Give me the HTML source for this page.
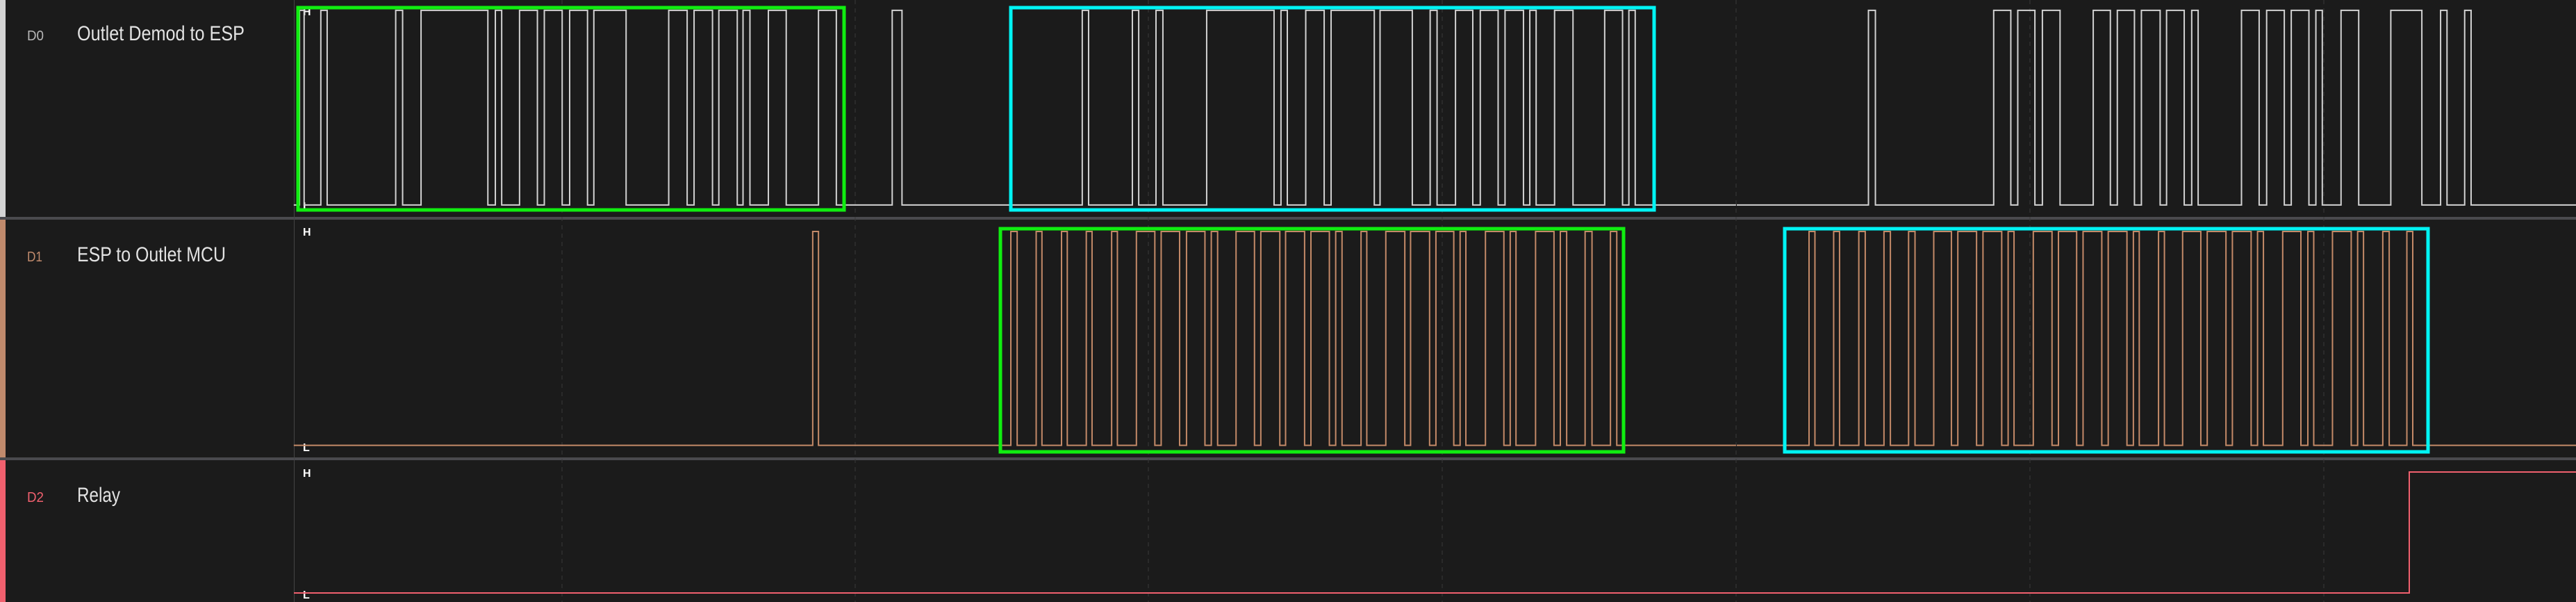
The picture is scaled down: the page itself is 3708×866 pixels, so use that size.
<!DOCTYPE html>
<html><head><meta charset="utf-8"><style>
html,body{margin:0;padding:0;background:#1b1b1b;width:3708px;height:866px;overflow:hidden}
svg{display:block}
text{font-family:"Liberation Sans",sans-serif}
</style></head><body>
<svg width="3708" height="866" viewBox="0 0 3708 866" xmlns="http://www.w3.org/2000/svg">
<rect width="3708" height="866" fill="#1b1b1b"/>
<rect x="0" y="0" width="8" height="312" fill="#d4d4d4"/>
<rect x="0" y="316" width="8" height="343" fill="#c08a6c"/>
<rect x="0" y="662" width="8" height="204" fill="#f0606e"/>
<rect x="0" y="312" width="3708" height="4" fill="#4a4a4e"/>
<rect x="0" y="658" width="3708" height="4" fill="#4a4a4e"/>
<rect x="423" y="0" width="1" height="866" fill="#444"/>
<g stroke="#3a3a3a" stroke-width="1" stroke-dasharray="6,6">
<line x1="809" y1="0" x2="809" y2="866"/><line x1="1231" y1="0" x2="1231" y2="866"/>
<line x1="1653" y1="0" x2="1653" y2="866"/><line x1="2076" y1="0" x2="2076" y2="866"/>
<line x1="2499" y1="0" x2="2499" y2="866"/><line x1="2922" y1="0" x2="2922" y2="866"/>
<line x1="3345" y1="0" x2="3345" y2="866"/>
</g>
<text x="39" y="58" font-size="20" fill="#b8b8b8" textLength="24" lengthAdjust="spacingAndGlyphs">D0</text>
<text x="111" y="58" font-size="30" fill="#e2e2e2" textLength="241" lengthAdjust="spacingAndGlyphs">Outlet Demod to ESP</text>
<text x="39" y="376" font-size="20" fill="#c08a6c" textLength="22" lengthAdjust="spacingAndGlyphs">D1</text>
<text x="111" y="376" font-size="30" fill="#e2e2e2" textLength="214" lengthAdjust="spacingAndGlyphs">ESP to Outlet MCU</text>
<text x="39" y="722" font-size="20" fill="#f0606e" textLength="24" lengthAdjust="spacingAndGlyphs">D2</text>
<text x="111" y="722" font-size="30" fill="#e2e2e2" textLength="62" lengthAdjust="spacingAndGlyphs">Relay</text>
<g font-size="16" font-weight="bold" fill="#ffffff">
<text x="436" y="22">H</text><text x="436" y="302">L</text>
<text x="436" y="339">H</text><text x="436" y="649">L</text>
<text x="436" y="686">H</text><text x="436" y="861">L</text>
</g>
<g fill="none" stroke="#d2d2d2" stroke-width="2">
<path vector-effect="non-scaling-stroke" transform="scale(0.8291,0.5523)" d="M510,534 H520 V27 H528 V534 H557 V27 H568 V534 H687 V27 H699 V534 H731 V27 H847 V534 H860 V27 H871 V534 H902 V27 H933 V534 H945 V27 H976 V534 H989 V27 H1020 V534 H1031 V27 H1087 V534 H1161 V27 H1193 V534 H1205 V27 H1237 V534 H1248 V27 H1280 V534 H1290 V27 H1302 V534 H1334 V27 H1365 V534 H1421 V27 H1452 V534 H1549 V27 H1566 V534 H1568"/>
<path vector-effect="non-scaling-stroke" transform="translate(1300,0) scale(0.8291,0.5523)" d="M0,534 H311 V27 H322 V534 H398 V27 H409 V534 H439 V27 H451 V534 H527 V27 H644 V534 H656 V27 H667 V534 H699 V27 H731 V534 H743 V27 H818 V534 H828 V27 H884 V534 H915 V27 H927 V534 H959 V27 H989 V534 H1002 V27 H1033 V534 H1045 V27 H1077 V534 H1088 V27 H1099 V534 H1131 V27 H1163 V534 H1218 V27 H1249 V534 H1260 V27 H1271 V534 H1446"/>
<path vector-effect="non-scaling-stroke" transform="translate(2500,0) scale(0.7704,0.5523)" d="M0,534 H246 V27 H259 V534 H480 V27 H512 V534 H525 V27 H557 V534 H571 V27 H604 V534 H666 V27 H698 V534 H711 V27 H743 V534 H756 V27 H791 V534 H803 V27 H836 V534 H850 V27 H862 V534 H943 V27 H976 V534 H990 V27 H1023 V534 H1036 V27 H1069 V534 H1082 V27 H1094 V534 H1129 V27 H1162 V534 H1222 V27 H1280 V534 H1315 V27 H1327 V534 H1360 V27 H1372 V534 H1568"/>
</g>
<g fill="none" stroke="#c48a68" stroke-width="2">
<path vector-effect="non-scaling-stroke" transform="scale(0.8291,0.5523)" d="M510,1160 H1411 V603 H1421 V1160 H1568"/>
<path vector-effect="non-scaling-stroke" transform="translate(1300,0) scale(0.8291,0.5523)" d="M0,1160 H187 V603 H198 V1160 H231 V603 H241 V1160 H275 V603 H285 V1160 H318 V603 H328 V1160 H362 V603 H372 V1160 H405 V603 H437 V1160 H448 V603 H480 V1160 H492 V603 H524 V1160 H535 V603 H546 V1160 H578 V603 H610 V1160 H621 V603 H654 V1160 H664 V603 H697 V1160 H708 V603 H740 V1160 H751 V603 H762 V1160 H795 V603 H805 V1160 H838 V603 H871 V1160 H881 V603 H914 V1160 H925 V603 H956 V1160 H967 V603 H977 V1160 H1011 V603 H1043 V1160 H1054 V603 H1064 V1160 H1098 V603 H1130 V1160 H1141 V603 H1152 V1160 H1184 V603 H1196 V1160 H1228 V603 H1239 V1160 H1446"/>
<path vector-effect="non-scaling-stroke" transform="translate(2500,0) scale(0.7704,0.5523)" d="M0,1160 H135 V603 H146 V1160 H181 V603 H192 V1160 H228 V603 H240 V1160 H275 V603 H287 V1160 H321 V603 H333 V1160 H368 V603 H401 V1160 H413 V603 H448 V1160 H460 V603 H495 V1160 H507 V603 H518 V1160 H554 V603 H589 V1160 H601 V603 H635 V1160 H647 V603 H682 V1160 H694 V603 H729 V1160 H741 V603 H752 V1160 H788 V603 H799 V1160 H833 V603 H867 V1160 H879 V603 H914 V1160 H926 V603 H961 V1160 H973 V603 H984 V1160 H1020 V603 H1054 V1160 H1067 V603 H1078 V1160 H1113 V603 H1148 V1160 H1160 V603 H1171 V1160 H1207 V603 H1219 V1160 H1252 V603 H1263 V1160 H1568"/>
</g>
<path d="M423,853 H3468 V679 H3708" fill="none" stroke="#f0606e" stroke-width="2"/>
<g fill="none" stroke-width="5">
<rect x="429" y="11" width="786" height="291" stroke="#10ee10"/>
<rect x="1455" y="11" width="926" height="291" stroke="#00f4f4"/>
<rect x="1440" y="329" width="897" height="321" stroke="#10ee10"/>
<rect x="2569" y="329" width="926" height="321" stroke="#00f4f4"/>
</g>
</svg>
</body></html>
